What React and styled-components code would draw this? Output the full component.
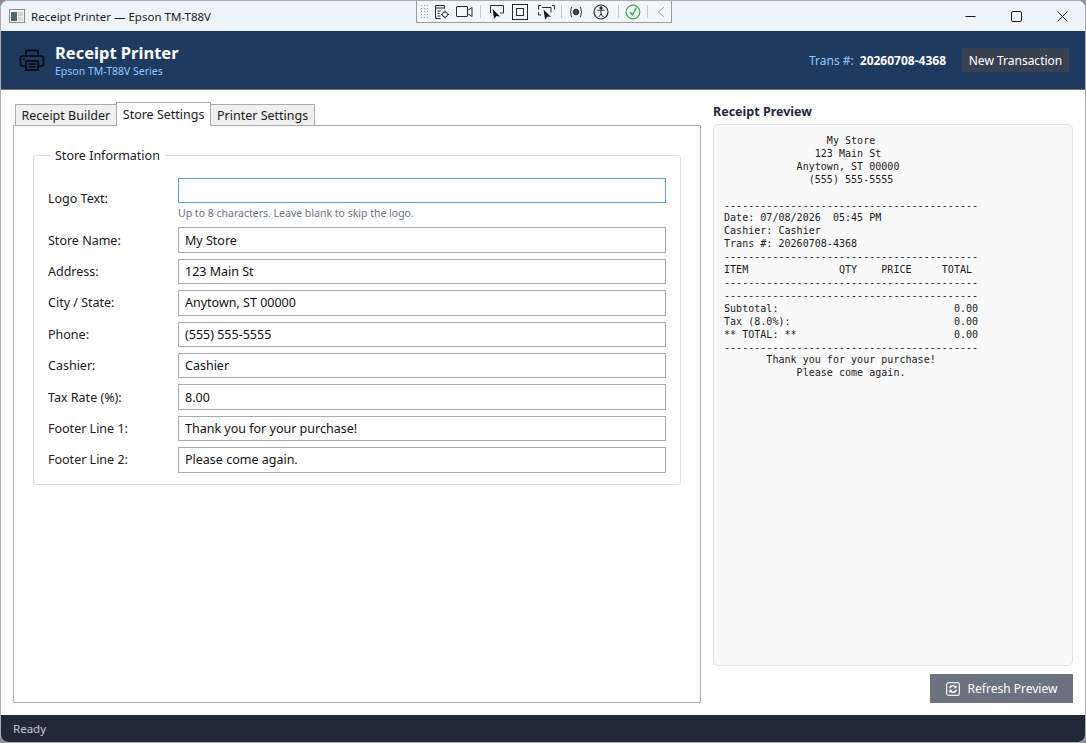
import React from 'react';
import styled, { createGlobalStyle } from 'styled-components';

const Global = createGlobalStyle`
	html, body {
		margin: 0;
		padding: 0;
		background: #8d8d96;
		overflow: hidden;
	}
	* {
		box-sizing: border-box;
	}
`;

const uiFont = `'Noto Sans', 'Open Sans', sans-serif`;

const Window = styled.div`
	position: relative;
	width: 1086px;
	height: 743px;
	display: flex;
	flex-direction: column;
	background: #fff;
	border: 1px solid #a9acb0;
	border-radius: 8px 8px 8px 8px;
	overflow: hidden;
	font-family: ${uiFont};
	font-size: 12.5px;
	color: #1a1a1a;
`;

const TitleBar = styled.div`
	height: 30px;
	flex-shrink: 0;
	display: flex;
	align-items: center;
	padding-left: 8px;
	background: #eff4f9;
`;

const TitleText = styled.span`
	margin-left: 6px;
	font-size: 11.5px;
	color: #1c1c1c;
`;

const WindowButtons = styled.div`
	margin-left: auto;
	display: flex;
	height: 100%;
`;

const WindowButton = styled.div`
	width: 46px;
	display: flex;
	align-items: center;
	justify-content: center;
`;

const DebugBar = styled.div`
	position: absolute;
	left: 415px;
	top: 0;
	width: 256px;
	height: 22px;
	display: flex;
	align-items: center;
	background: #f3f5f8;
	border: 1px solid #9b9b9b;
	border-top: none;
`;

const Grip = styled.div`
	width: 8px;
	height: 16px;
	margin: 0 5px 0 3px;
	background-image: radial-gradient(#a0a0a0 0.6px, transparent 0.7px);
	background-size: 3px 3px;
`;

const DebugIcon = styled.div`
	width: ${(p) => p.$w || 24}px;
	height: 20px;
	display: flex;
	align-items: center;
	justify-content: center;
`;

const DebugSep = styled.div`
	width: 1px;
	height: 13px;
	margin: 0 3px;
	background: #c5c5cf;
`;

const Header = styled.header`
	height: 59px;
	flex-shrink: 0;
	display: flex;
	align-items: center;
	padding: 0 16px 0 18px;
	background: #1e3a5f;
	border-bottom: 1px solid #65758a;
`;

const Brand = styled.div`
	margin-left: 10px;
	display: flex;
	flex-direction: column;
`;

const AppName = styled.div`
	font-size: 16.5px;
	font-weight: 700;
	line-height: 22px;
	color: #fff;
`;

const AppSub = styled.div`
	font-size: 10.5px;
	line-height: 14px;
	color: #93c5fd;
`;

const TransLabel = styled.span`
	margin-left: auto;
	font-size: 12px;
	color: #93c5fd;
`;

const TransValue = styled.span`
	margin-left: 6px;
	font-size: 12px;
	font-weight: 700;
	color: #fff;
`;

const NewButton = styled.button`
	margin-left: 16px;
	width: 107px;
	height: 24px;
	border: none;
	padding: 0;
	background: #374151;
	color: #fff;
	font-family: ${uiFont};
	font-size: 12px;
`;

const Main = styled.main`
	flex: 1;
	display: flex;
	gap: 12px;
	padding: 12px 12px 12px 12px;
	min-height: 0;
`;

const LeftColumn = styled.div`
	width: 688px;
	display: flex;
	flex-direction: column;
`;

const Tabs = styled.div`
	height: 24px;
	display: flex;
	align-items: flex-end;
	padding-left: 2px;
	position: relative;
	z-index: 1;
`;

const Tab = styled.div`
	height: ${(p) => (p.$active ? 24 : 22)}px;
	padding: 0 ${(p) => (p.$active ? 6 : 5.5)}px;
	display: flex;
	align-items: center;
	margin-right: -1px;
	background: ${(p) => (p.$active ? '#fff' : '#f0f0f0')};
	border: 1px solid #acacac;
	border-bottom: ${(p) => (p.$active ? 'none' : '1px solid #acacac')};
	position: relative;
	z-index: ${(p) => (p.$active ? 2 : 0)};
	font-size: 12.5px;
	white-space: nowrap;
`;

const TabPanel = styled.div`
	flex: 1;
	margin-top: -1px;
	padding: 21px 19px;
	border: 1px solid #acacac;
	background: #fff;
`;

const Group = styled.fieldset`
	margin: 0;
	padding: 14px 14px 17px 14px;
	height: 338px;
	border: 1px solid #d9e1e8;
	border-radius: 3px;
`;

const Legend = styled.legend`
	padding: 0 5px 0 4px;
	margin-left: 3px;
	font-size: 12.5px;
	line-height: 17px;
`;

const Row = styled.div`
	display: flex;
	align-items: center;
	height: 25.4px;
	margin-bottom: 6px;
`;

const LogoRow = styled.div`
	display: flex;
	margin-bottom: 6px;
`;

const Label = styled.label`
	width: 130px;
	flex-shrink: 0;
	font-size: 12.5px;
`;

const LogoLabel = styled(Label)`
	line-height: 41px;
`;

const Field = styled.div`
	width: 488px;
`;

const Input = styled.input`
	display: block;
	width: 488px;
	height: 25.4px;
	padding: 0 6px;
	border: 1px solid ${(p) => (p.$focused ? '#5f9bdf' : '#a9a9b1')};
	outline: none;
	border-radius: 0;
	background: #fff;
	color: #111;
	font-family: ${uiFont};
	font-size: 12.5px;
`;

const Hint = styled.div`
	margin-top: 3px;
	font-size: 10.5px;
	line-height: 15px;
	color: #6b7280;
`;

const RightColumn = styled.div`
	width: 360px;
	display: flex;
	flex-direction: column;
`;

const PreviewTitle = styled.div`
	height: 22px;
	font-size: 12.5px;
	font-weight: 700;
	line-height: 20px;
	color: #1f2937;
`;

const Preview = styled.pre`
	flex: 1;
	margin: 0;
	padding: 10px;
	border: 1px solid #e0e2e6;
	border-radius: 5px;
	background: #f9f9f9;
	color: #1a1a1a;
	font-family: 'DejaVu Sans Mono', 'Liberation Mono', monospace;
	font-size: 10px;
	letter-spacing: 0.03px;
	line-height: 12.9px;
`;

const RefreshButton = styled.button`
	margin-top: 8px;
	align-self: flex-end;
	width: 143px;
	height: 29px;
	display: flex;
	align-items: center;
	justify-content: center;
	gap: 8px;
	border: none;
	padding: 0;
	background: #6b7280;
	color: #fff;
	font-family: ${uiFont};
	font-size: 12px;
`;

const StatusBar = styled.footer`
	height: 27px;
	flex-shrink: 0;
	display: flex;
	align-items: center;
	padding-left: 12px;
	background: #1f2937;
	color: #c3c9d2;
	font-size: 11.5px;
`;

const fields = [
	['Store Name:', 'My Store'],
	['Address:', '123 Main St'],
	['City / State:', 'Anytown, ST 00000'],
	['Phone:', '(555) 555-5555'],
	['Cashier:', 'Cashier'],
	['Tax Rate (%):', '8.00'],
	['Footer Line 1:', 'Thank you for your purchase!'],
	['Footer Line 2:', 'Please come again.'],
];

const dashes = '-'.repeat(42);

const receipt = [
	'                 My Store',
	'               123 Main St',
	'            Anytown, ST 00000',
	'              (555) 555-5555',
	'',
	dashes,
	'Date: 07/08/2026  05:45 PM',
	'Cashier: Cashier',
	'Trans #: 20260708-4368',
	dashes,
	'ITEM               QTY    PRICE     TOTAL',
	dashes,
	dashes,
	'Subtotal:                             0.00',
	'Tax (8.0%):                           0.00',
	'** TOTAL: **                          0.00',
	dashes,
	'       Thank you for your purchase!',
	'            Please come again.',
].join('\n');

const AppIcon = () => (
	<svg width="16" height="14" viewBox="0 0 16 14">
		<rect x="0.5" y="0.5" width="15" height="13" fill="#f4f4f4" stroke="#8a8f94" />
		<rect x="2" y="3" width="6" height="9" fill="#4c6b66" />
		<rect x="9" y="3" width="5" height="4" fill="#c9d6c9" />
		<rect x="9" y="8" width="5" height="4" fill="#d8dde2" />
	</svg>
);

const PrinterIcon = () => (
	<svg width="26" height="26" viewBox="0 0 26 26" fill="none" stroke="#05080c" strokeWidth="1.7">
		<path d="M7 9V3.5h12V9" />
		<path d="M6.5 19H3.5a2 2 0 0 1-2-2v-6a2 2 0 0 1 2-2h19a2 2 0 0 1 2 2v6a2 2 0 0 1-2 2h-3" />
		<rect x="7" y="14" width="12" height="9" />
		<path d="M9.5 17h7M9.5 20h7M4 12h2" />
	</svg>
);

const Refresh = () => (
	<svg width="14" height="14" viewBox="0 0 14 14" fill="none">
		<rect x="0.6" y="0.6" width="12.8" height="12.8" rx="2.5" stroke="#eef2f7" strokeWidth="1.2" />
		<path d="M3.6 6.2A3.4 3.4 0 0 1 9.6 5" stroke="#fff" strokeWidth="1.4" />
		<path d="M10.4 7.8A3.4 3.4 0 0 1 4.4 9" stroke="#fff" strokeWidth="1.4" />
		<path d="M10.6 3.2v3H7.6zM3.4 10.8v-3h3z" fill="#fff" />
	</svg>
);

const ToolIcon = ({ children, w, h = 18 }) => (
	<svg width={w} height={h} viewBox={`0 0 ${w} ${h}`} fill="none" stroke="#2a2a2a" strokeWidth="1">
		{children}
	</svg>
);

export default function App() {
	return (
		<>
			<Global />
			<Window>
				<TitleBar>
					<AppIcon />
					<TitleText>Receipt Printer — Epson TM-T88V</TitleText>
					<WindowButtons>
						<WindowButton>
							<svg width="11" height="11" viewBox="0 0 11 11"><path d="M0.5 5.5h10" stroke="#1a1a1a" /></svg>
						</WindowButton>
						<WindowButton>
							<svg width="11" height="11" viewBox="0 0 11 11" fill="none"><rect x="0.5" y="0.5" width="10" height="10" rx="1.5" stroke="#1a1a1a" /></svg>
						</WindowButton>
						<WindowButton>
							<svg width="11" height="11" viewBox="0 0 11 11"><path d="M0.5 0.5l10 10M10.5 0.5l-10 10" stroke="#1a1a1a" /></svg>
						</WindowButton>
					</WindowButtons>
				</TitleBar>
				<DebugBar>
					<Grip />
					<DebugIcon $w={18}>
						<ToolIcon w={16}>
							<path d="M1.5 2.5h9M1.5 2.5v13h5M1.5 5h9M10.5 2.5v3M3.5 8h3M3.5 10.5h2M3.5 13h3" />
							<circle cx="11" cy="11.5" r="2.6" />
							<path d="M11 7.5v1.4M11 14.1v1.4M7 11.5h1.4M13.6 11.5H15" />
						</ToolIcon>
					</DebugIcon>
					<DebugIcon $w={26}>
						<ToolIcon w={17}>
							<rect x="0.5" y="3.5" width="11" height="10" rx="0.5" />
							<path d="M11.5 7.5l4.5-3v9l-4.5-3" />
						</ToolIcon>
					</DebugIcon>
					<DebugSep />
					<DebugIcon $w={22}>
						<ToolIcon w={17}>
							<path d="M3.5 10V2.5h13V10H13" />
							<path d="M5.5 6l1.6 10 2.4-3 3.5.6z" fill="#111" stroke="none" />
						</ToolIcon>
					</DebugIcon>
					<DebugIcon $w={28}>
						<ToolIcon w={16}>
							<rect x="0.5" y="1.5" width="15" height="15" stroke="#222" />
							<rect x="4.5" y="5.5" width="7" height="7" />
						</ToolIcon>
					</DebugIcon>
					<DebugIcon $w={24}>
						<ToolIcon w={17}>
							<path d="M3 2.5H.5v4M14 2.5h2.5v4M.5 9v3H3M4 4.5h9v5" />
							<path d="M5.5 6.5l1.6 10 2.4-3 3.5.6z" fill="#111" stroke="none" />
						</ToolIcon>
					</DebugIcon>
					<DebugSep />
					<DebugIcon $w={22}>
						<ToolIcon w={14}>
							<path d="M3 4c-2 0 0 5-2 5 2 0 0 5 2 5M11 4c2 0 0 5 2 5-2 0 0 5-2 5" />
							<circle cx="7" cy="9" r="2.8" fill="#444" />
						</ToolIcon>
					</DebugIcon>
					<DebugIcon $w={28}>
						<ToolIcon w={16}>
							<circle cx="8" cy="9" r="7" strokeWidth="1.2" />
							<circle cx="8" cy="5" r="1.2" fill="#222" />
							<path d="M4.5 7.2h7M8 7.2v3.6M8 10.8l-2 3M8 10.8l2 3" />
						</ToolIcon>
					</DebugIcon>
					<DebugSep />
					<DebugIcon $w={22}>
						<ToolIcon w={16}>
							<circle cx="8" cy="9" r="6.8" stroke="#3aa655" strokeWidth="1.2" />
							<path d="M5 9l2.3 3L11.5 4.5" stroke="#3aa655" strokeWidth="1.4" />
						</ToolIcon>
					</DebugIcon>
					<DebugSep />
					<DebugIcon $w={20}>
						<ToolIcon w={8}>
							<path d="M7 4L1.5 9 7 14" stroke="#a8a8a8" />
						</ToolIcon>
					</DebugIcon>
				</DebugBar>
				<Header>
					<PrinterIcon />
					<Brand>
						<AppName>Receipt Printer</AppName>
						<AppSub>Epson TM-T88V Series</AppSub>
					</Brand>
					<TransLabel>Trans #:</TransLabel>
					<TransValue>20260708-4368</TransValue>
					<NewButton>New Transaction</NewButton>
				</Header>
				<Main>
					<LeftColumn>
						<Tabs>
							<Tab>Receipt Builder</Tab>
							<Tab $active>Store Settings</Tab>
							<Tab>Printer Settings</Tab>
						</Tabs>
						<TabPanel>
							<Group>
								<Legend>Store Information</Legend>
								<LogoRow>
									<LogoLabel>Logo Text:</LogoLabel>
									<Field>
										<Input $focused readOnly value="" />
										<Hint>Up to 8 characters. Leave blank to skip the logo.</Hint>
									</Field>
								</LogoRow>
								{fields.map(([label, value]) => (
									<Row key={label}>
										<Label>{label}</Label>
										<Input readOnly value={value} />
									</Row>
								))}
							</Group>
						</TabPanel>
					</LeftColumn>
					<RightColumn>
						<PreviewTitle>Receipt Preview</PreviewTitle>
						<Preview>{receipt}</Preview>
						<RefreshButton>
							<Refresh />
							Refresh Preview
						</RefreshButton>
					</RightColumn>
				</Main>
				<StatusBar>Ready</StatusBar>
			</Window>
		</>
	);
}
